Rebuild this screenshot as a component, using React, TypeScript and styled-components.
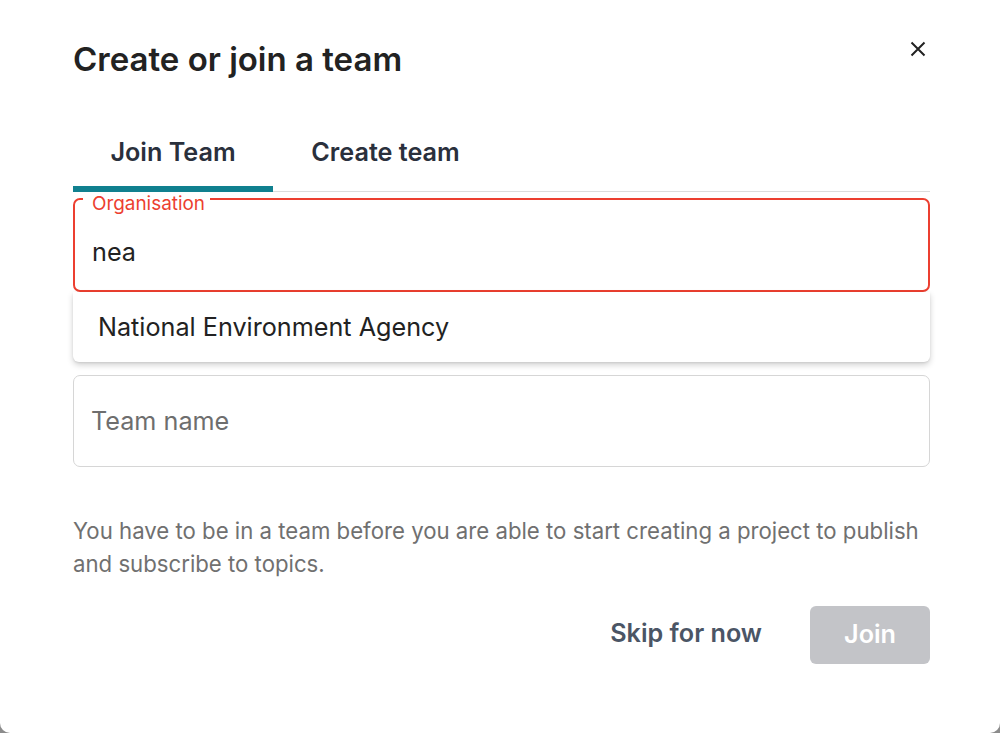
import { useState } from 'react';
import styled, { createGlobalStyle } from 'styled-components';

const GlobalStyle = createGlobalStyle`
  html, body {
    margin: 0;
    padding: 0;
    background: #8c8c8c;
    font-family: Inter, 'Noto Sans', sans-serif;
  }
  * { box-sizing: border-box; }
`;

const TABS = ['Join Team', 'Create team'];

export default function App() {
  const [active, setActive] = useState(0);

  return (
    <>
      <GlobalStyle />
      <Dialog>
        <Header>
          <Title>Create or join a team</Title>
          <CloseButton aria-label="Close">
            <svg width="16" height="16" viewBox="0 0 16 16" fill="none">
              <path d="M1.5 1.5L14.5 14.5M14.5 1.5L1.5 14.5" stroke="#222" strokeWidth="2" />
            </svg>
          </CloseButton>
        </Header>

        <TabList>
          {TABS.map((tab, i) => (
            <Tab key={tab} $active={i === active} $width={i === 0 ? 200 : 225} onClick={() => setActive(i)}>
              {tab}
            </Tab>
          ))}
        </TabList>

        <OrgField>
          <Fieldset>
            <Legend>Organisation</Legend>
          </Fieldset>
          <Label>Organisation</Label>
          <InputText>nea</InputText>
        </OrgField>
        <Dropdown>
          <Option>National Environment Agency</Option>
        </Dropdown>

        <TeamField>
          <Placeholder>Team name</Placeholder>
        </TeamField>

        <Helper>
          You have to be in a team before you are able to start creating a project to publish and subscribe to topics.
        </Helper>

        <Actions>
          <SkipButton>Skip for now</SkipButton>
          <JoinButton disabled>Join</JoinButton>
        </Actions>
      </Dialog>
    </>
  );
}

const Dialog = styled.div`
  width: 1000px;
  height: 733px;
  background: #fff;
  border-radius: 0 0 10px 10px;
  padding: 0 70px 0 73px;
  display: flex;
  flex-direction: column;
`;

const Header = styled.div`
  display: flex;
  justify-content: space-between;
  align-items: flex-start;
  padding-top: 38px;
  height: 126px;
`;

const Title = styled.h1`
  margin: 0;
  font-size: 33px;
  line-height: 42px;
  font-weight: 600;
  color: #222;
`;

const CloseButton = styled.button`
  border: 0;
  background: none;
  padding: 0;
  margin-top: 3px;
  margin-right: 4px;
  width: 16px;
  height: 16px;
  display: flex;
  cursor: pointer;
`;

const TabList = styled.div`
  display: flex;
  border-bottom: 1px solid #dcdcdc;
  height: 66px;
`;

const Tab = styled.button<{ $active: boolean; $width: number }>`
  width: ${(p) => p.$width}px;
  border: 0;
  background: none;
  padding: 0 0 8px;
  font-family: inherit;
  font-size: 25.2px;
  font-weight: 600;
  color: #2a303c;
  border-bottom: 6px solid ${(p) => (p.$active ? '#10808f' : 'transparent')};
  margin-bottom: -1px;
  cursor: pointer;
`;

const OrgField = styled.div`
  position: relative;
  margin-top: 8px;
  height: 92px;
  display: flex;
  align-items: center;
  padding: 12px 19px 0;
`;

const Fieldset = styled.fieldset`
  position: absolute;
  inset: -12px 0 0 0;
  margin: 0;
  padding: 0 8px;
  border: 2px solid #ec3f30;
  border-radius: 7px;
  pointer-events: none;
`;

const Legend = styled.legend`
  padding: 0 7px;
  font-size: 18.9px;
  line-height: 22px;
  visibility: hidden;
`;

const Label = styled.span`
  position: absolute;
  left: 19px;
  top: -7px;
  font-size: 18.9px;
  line-height: 22px;
  color: #ec3f30;
`;

const InputText = styled.span`
  font-size: 25.2px;
  color: #222;
`;

const Dropdown = styled.ul`
  list-style: none;
  margin: 0;
  padding: 0;
  height: 70px;
  background: #fff;
  border-radius: 0 0 6px 6px;
  box-shadow: 0 3px 6px rgba(0, 0, 0, 0.18), 0 1px 2px rgba(0, 0, 0, 0.08);
  position: relative;
  z-index: 1;
`;

const Option = styled.li`
  height: 70px;
  display: flex;
  align-items: center;
  padding-left: 25px;
  font-size: 25.2px;
  color: #222;
`;

const TeamField = styled.div`
  margin-top: 13px;
  height: 92px;
  border: 1px solid #d6d6d6;
  border-radius: 7px;
  display: flex;
  align-items: center;
  padding: 0 17px;
`;

const Placeholder = styled.span`
  font-size: 25.2px;
  color: #6e6e6e;
`;

const Helper = styled.p`
  margin: 47px 0 0;
  font-size: 22.2px;
  line-height: 33px;
  color: #707070;
`;

const Actions = styled.div`
  display: flex;
  justify-content: flex-end;
  align-items: center;
  gap: 48px;
  margin-top: 26px;
`;

const SkipButton = styled.button`
  border: 0;
  background: none;
  padding: 0 0 4px;
  font-family: inherit;
  font-size: 25.2px;
  font-weight: 600;
  color: #4b5565;
  cursor: pointer;
`;

const JoinButton = styled.button`
  width: 120px;
  height: 58px;
  border: 0;
  border-radius: 6px;
  background: #c3c4c8;
  color: #fff;
  font-family: inherit;
  font-size: 25.2px;
  font-weight: 600;
  padding: 0 0 3px;
`;
